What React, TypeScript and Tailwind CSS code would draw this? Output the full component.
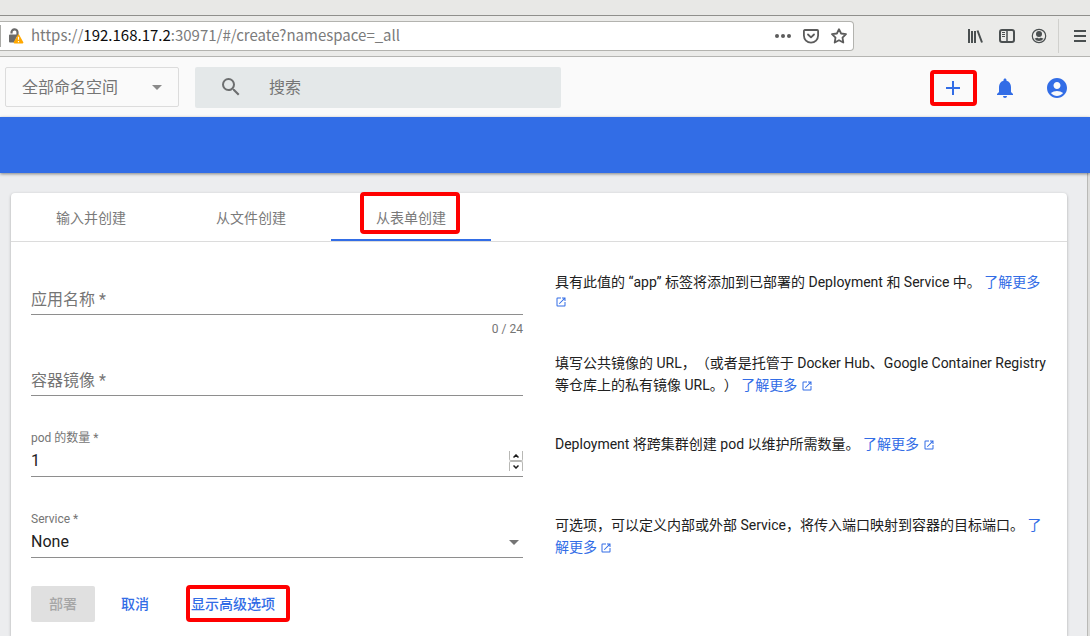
import React from "react";
import {
  MdSearch,
  MdAdd,
  MdNotifications,
  MdAccountCircle,
  MdOpenInNew,
  MdArrowDropDown,
} from "react-icons/md";

const UI_FONT = "font-['Roboto','Noto_Sans_CJK_SC',sans-serif]";

function Highlight({ className }: { className: string }) {
  return (
    <span
      aria-hidden="true"
      className={`pointer-events-none absolute z-10 rounded-[4px] border-4 border-[#ff0000] ${className}`}
    />
  );
}

function LockWarningIcon() {
  return (
    <svg width="16" height="16" viewBox="0 0 16 16" aria-hidden="true">
      <path d="M3.500 5.500V4.800a3 3 0 0 1 6-.8V8" fill="none" stroke="#6b6b6b" strokeWidth="2.200" />
      <path d="M2 6.500h8L6 14.500H2a1 1 0 0 1-1-1v-6a1 1 0 0 1 1-1z" fill="#6b6b6b" />
      <path d="M10.500 7.200 14.600 14.600H6.400z" fill="#ffa800" stroke="#ffa800" strokeWidth="1.600" strokeLinejoin="round" />
      <path d="M10.500 8.800v3M10.500 12.900v1.300" stroke="#fff" strokeWidth="1.200" />
    </svg>
  );
}

function DotsIcon() {
  return (
    <svg width="16" height="16" viewBox="0 0 16 16" fill="#5c5c5c" aria-hidden="true">
      <circle cx="2" cy="8" r="2" />
      <circle cx="8" cy="8" r="2" />
      <circle cx="14" cy="8" r="2" />
    </svg>
  );
}

function PocketIcon() {
  return (
    <svg width="16" height="16" viewBox="0 0 16 16" fill="none" stroke="#5c5c5c" aria-hidden="true">
      <path d="M1.800 2h12.400a.9.9 0 0 1 .9.900V7.500a7.100 7.100 0 0 1-14.200 0V2.900a.9.9 0 0 1 .9-.9z" strokeWidth="1.800" />
      <path d="M5 6.500 8 9.400l3-2.900" strokeWidth="1.800" strokeLinecap="round" strokeLinejoin="round" />
    </svg>
  );
}

function StarIcon() {
  return (
    <svg width="16" height="16" viewBox="0 0 16 16" fill="none" stroke="#5c5c5c" aria-hidden="true">
      <path d="M8 1.200l2.100 4.300 4.900.7-3.500 3.400.8 4.900L8 12.200l-4.300 2.300.8-4.900L1 6.200l4.900-.7z" strokeWidth="1.800" strokeLinejoin="round" />
    </svg>
  );
}

function LibraryIcon() {
  return (
    <svg width="16" height="16" viewBox="0 0 16 16" stroke="#4a4f50" strokeWidth="2" fill="none" aria-hidden="true">
      <path d="M2 1v14M5 3v12M8 3v12M10.500 2.500 15 14.500" />
    </svg>
  );
}

function SidebarIcon() {
  return (
    <svg width="16" height="16" viewBox="0 0 16 16" stroke="#4a4f50" fill="none" aria-hidden="true">
      <rect x="1" y="2" width="14" height="12" rx="2" strokeWidth="2" />
      <path d="M8 2v12" strokeWidth="1.500" />
      <path d="M3 4.500h3M3 6.500h3M3 8.500h3" strokeWidth="1" />
    </svg>
  );
}

function AccountIcon() {
  return (
    <svg width="16" height="16" viewBox="0 0 16 16" aria-hidden="true">
      <circle cx="8" cy="8" r="6.700" fill="none" stroke="#4a4f50" strokeWidth="1.200" />
      <circle cx="8" cy="6" r="3" fill="#4a4f50" />
      <path d="M3.500 10.500c1.500-.7 2.500-.8 3-.8l1.500.8 1.500-.8c.5 0 1.500.1 3 .8A5.300 5.300 0 0 1 8 13a5.300 5.300 0 0 1-4.500-2.500z" fill="#4a4f50" />
    </svg>
  );
}

function MenuIcon() {
  return (
    <svg width="14" height="16" viewBox="0 0 14 16" stroke="#4a4f50" strokeWidth="2" aria-hidden="true">
      <path d="M1 3h12M1 8h12M1 13h12" />
    </svg>
  );
}

function BrowserBar() {
  return (
    <div className="font-['Noto_Sans_CJK_SC',sans-serif]">
      <div className="h-4 border-b border-[#8f8f8c] bg-[#e8e8e6]" />
      <div className="flex h-[41px] items-center border-b border-[#b5b5b2] bg-[#ebebe9]">
        <div className="flex h-[30px] w-[854px] items-center rounded-r-[4px] border border-l-0 border-[#b3b3af] bg-white pr-[6px]">
          <span className="h-[22px] w-px bg-[#a9a9a6]" />
          <span className="ml-[7px]">
            <LockWarningIcon />
          </span>
          <div className="ml-[7px] flex-1 whitespace-nowrap pb-[2px] text-[15px] leading-5 text-[#7b7b7b]">
            https://<span className="text-[#0c0c0d]">192.168.17.2</span>:30971/#/create?namespace=_all
          </div>
          <div className="flex items-center gap-3">
            <button type="button" aria-label="页面操作"><DotsIcon /></button>
            <button type="button" aria-label="保存到 Pocket"><PocketIcon /></button>
            <button type="button" aria-label="添加书签"><StarIcon /></button>
          </div>
        </div>
        <div className="ml-auto flex items-center gap-4">
          <button type="button" aria-label="书库"><LibraryIcon /></button>
          <button type="button" aria-label="侧栏"><SidebarIcon /></button>
          <button type="button" aria-label="账户"><AccountIcon /></button>
        </div>
        <div className="ml-[11px] flex h-[34px] items-center border-l border-[#d0d0cd] pl-[14px] pr-[3px]">
          <button type="button" aria-label="菜单"><MenuIcon /></button>
        </div>
      </div>
    </div>
  );
}

function Header() {
  return (
    <header className="flex h-[60px] items-center bg-[#fafafa] pl-[5px] pr-[13px]">
      <div className="grid w-[174px] items-center rounded-[2px] border border-[#dcdcdc]">
        <select
          aria-label="命名空间"
          className="col-start-1 row-start-1 h-[38px] appearance-none bg-transparent pl-4 pr-9 pt-[2px] text-base text-[#757575] outline-none"
        >
          <option>全部命名空间</option>
        </select>
        <MdArrowDropDown className="pointer-events-none col-start-1 row-start-1 mr-[9px] size-6 justify-self-end text-[#8a8a8a]" />
      </div>
      <label className="ml-4 flex h-[41px] w-[366px] items-center rounded-[2px] bg-[#e4e8e9] pl-6">
        <MdSearch className="size-6 text-[#6c6e6f]" />
        <input
          type="search"
          aria-label="搜索"
          placeholder="搜索"
          className="ml-[26px] min-w-0 flex-1 bg-transparent pt-[2px] text-base text-[#757575] outline-none placeholder:text-[#757575]"
        />
      </label>
      <nav className="ml-auto flex gap-3 pt-[2px] text-[#326de6]">
        <button type="button" aria-label="创建" className="relative flex size-10 items-center justify-center">
          <MdAdd className="size-6" />
          <Highlight className="-left-[3px] top-[2px] h-9 w-[47px]" />
        </button>
        <button type="button" aria-label="通知" className="flex size-10 items-center justify-center">
          <MdNotifications className="size-6" />
        </button>
        <button type="button" aria-label="用户" className="flex size-10 items-center justify-center">
          <MdAccountCircle className="size-6" />
        </button>
      </nav>
    </header>
  );
}

function LearnMore() {
  return (
    <a href="#" className="text-[#326de6]">
      <span className="leading-[22px]">了解更多</span>{" "}
      <MdOpenInNew className="inline-block size-3 align-middle" />
    </a>
  );
}

function Row({ children, help }: { children: React.ReactNode; help: string }) {
  return (
    <div className="grid h-[81px] grid-cols-2 gap-8">
      <div>{children}</div>
      <p className="pt-[9px] text-sm leading-4 text-[#212121] [text-spacing-trim:space-all]">
        <span className="leading-[22px]">{help}</span> <LearnMore />
      </p>
    </div>
  );
}

const fieldBox = "h-[53px] border-b border-[#8e8e8e] pt-1";
const smallLabel = "block text-xs leading-5 text-[#757575]";
const control = "h-[26px] w-full min-w-0 appearance-none bg-transparent text-base leading-[26px] text-[#212121] outline-none";

function EmptyField({ id, label, hint }: { id: string; label: string; hint?: string }) {
  return (
    <>
      <div className={`${fieldBox} grid items-center pt-6`}>
        <label htmlFor={id} className="pointer-events-none col-start-1 row-start-1 text-base leading-6 text-[#757575]">
          {label} *
        </label>
        <input id={id} type="text" className={`${control} col-start-1 row-start-1`} />
      </div>
      {hint && <p className="pt-1 text-right text-xs leading-5 text-[#757575]">{hint}</p>}
    </>
  );
}

function PodCountField() {
  return (
    <div className={fieldBox}>
      <label htmlFor="pods" className={smallLabel}>pod 的数量 *</label>
      <div className="flex items-center">
        <input id="pods" type="text" inputMode="numeric" defaultValue="1" className={control} />
        <div className="flex w-[14px] shrink-0 flex-col">
          <button type="button" aria-label="增加" className="flex h-[10px] items-center justify-center rounded-b-[2px] border border-t-0 border-[#b8b8b5]">
            <svg width="6" height="4" viewBox="0 0 6 4" aria-hidden="true">
              <path d="M.5 3.500 3 1l2.500 2.500" fill="none" stroke="#1c1c1c" strokeWidth="1.500" />
            </svg>
          </button>
          <button type="button" aria-label="减少" className="flex h-[10px] items-center justify-center rounded-t-[2px] border border-b-0 border-[#b8b8b5]">
            <svg width="6" height="4" viewBox="0 0 6 4" aria-hidden="true">
              <path d="M.5.500 3 3 5.500.5" fill="none" stroke="#1c1c1c" strokeWidth="1.500" />
            </svg>
          </button>
        </div>
      </div>
    </div>
  );
}

function ServiceField() {
  return (
    <div className={fieldBox}>
      <label htmlFor="service" className={smallLabel}>Service *</label>
      <div className="grid items-center">
        <select id="service" defaultValue="None" className={`${control} col-start-1 row-start-1`}>
          <option>None</option>
        </select>
        <MdArrowDropDown className="pointer-events-none col-start-1 row-start-1 -mr-[3px] size-6 justify-self-end text-[#757575]" />
      </div>
    </div>
  );
}

const tab = "relative flex h-12 w-40 items-center justify-center border-b-2 pt-1 text-sm text-[#7a7a7a]";

export default function App() {
  return (
    <div className={`flex min-h-screen flex-col bg-[#ecedef] ${UI_FONT}`}>
      <BrowserBar />
      <Header />
      <div className="z-[1] h-14 bg-[#326de6] shadow-[0_1px_3px_rgba(0,0,0,0.45)]" />
      <div className="flex flex-1">
        <main className="ml-[11px] mr-5 mt-5 flex-1 rounded-t-[4px] bg-white shadow-[0_1px_3px_rgba(0,0,0,0.3)]">
          <div role="tablist" className="flex border-b border-[#dcdcdc]">
            <button type="button" role="tab" aria-selected="false" className={`${tab} border-transparent`}>输入并创建</button>
            <button type="button" role="tab" aria-selected="false" className={`${tab} border-transparent`}>从文件创建</button>
            <button type="button" role="tab" aria-selected="true" className={`${tab} border-[#326de6]`}>
              从表单创建
              <Highlight className="-top-px left-[29px] h-[42px] w-[100px]" />
            </button>
          </div>
          <form className="px-5 pt-5" onSubmit={(event) => event.preventDefault()}>
            <Row help="具有此值的 “app” 标签将添加到已部署的 Deployment 和 Service 中。">
              <EmptyField id="app-name" label="应用名称" hint="0 / 24" />
            </Row>
            <Row help="填写公共镜像的 URL，（或者是托管于 Docker Hub、Google Container Registry 等仓库上的私有镜像 URL。）">
              <EmptyField id="image" label="容器镜像" />
            </Row>
            <Row help="Deployment 将跨集群创建 pod 以维护所需数量。">
              <PodCountField />
            </Row>
            <Row help="可选项，可以定义内部或外部 Service，将传入端口映射到容器的目标端口。">
              <ServiceField />
            </Row>
            <div className="flex gap-[10px] text-sm font-medium text-[#326de6]">
              <button type="button" disabled className="h-9 w-16 rounded-[2px] bg-[#e0e0e0] text-[#a6a6a6]">部署</button>
              <button type="button" className="h-9 w-[60px]">取消</button>
              <button type="button" className="relative h-9 px-4">
                显示高级选项
                <Highlight className="left-[11px] -top-px h-[37px] w-[104px]" />
              </button>
            </div>
          </form>
        </main>
        <div className="w-[3px] border-l border-[#b9b9b6] bg-[#dededc]" />
      </div>
    </div>
  );
}
